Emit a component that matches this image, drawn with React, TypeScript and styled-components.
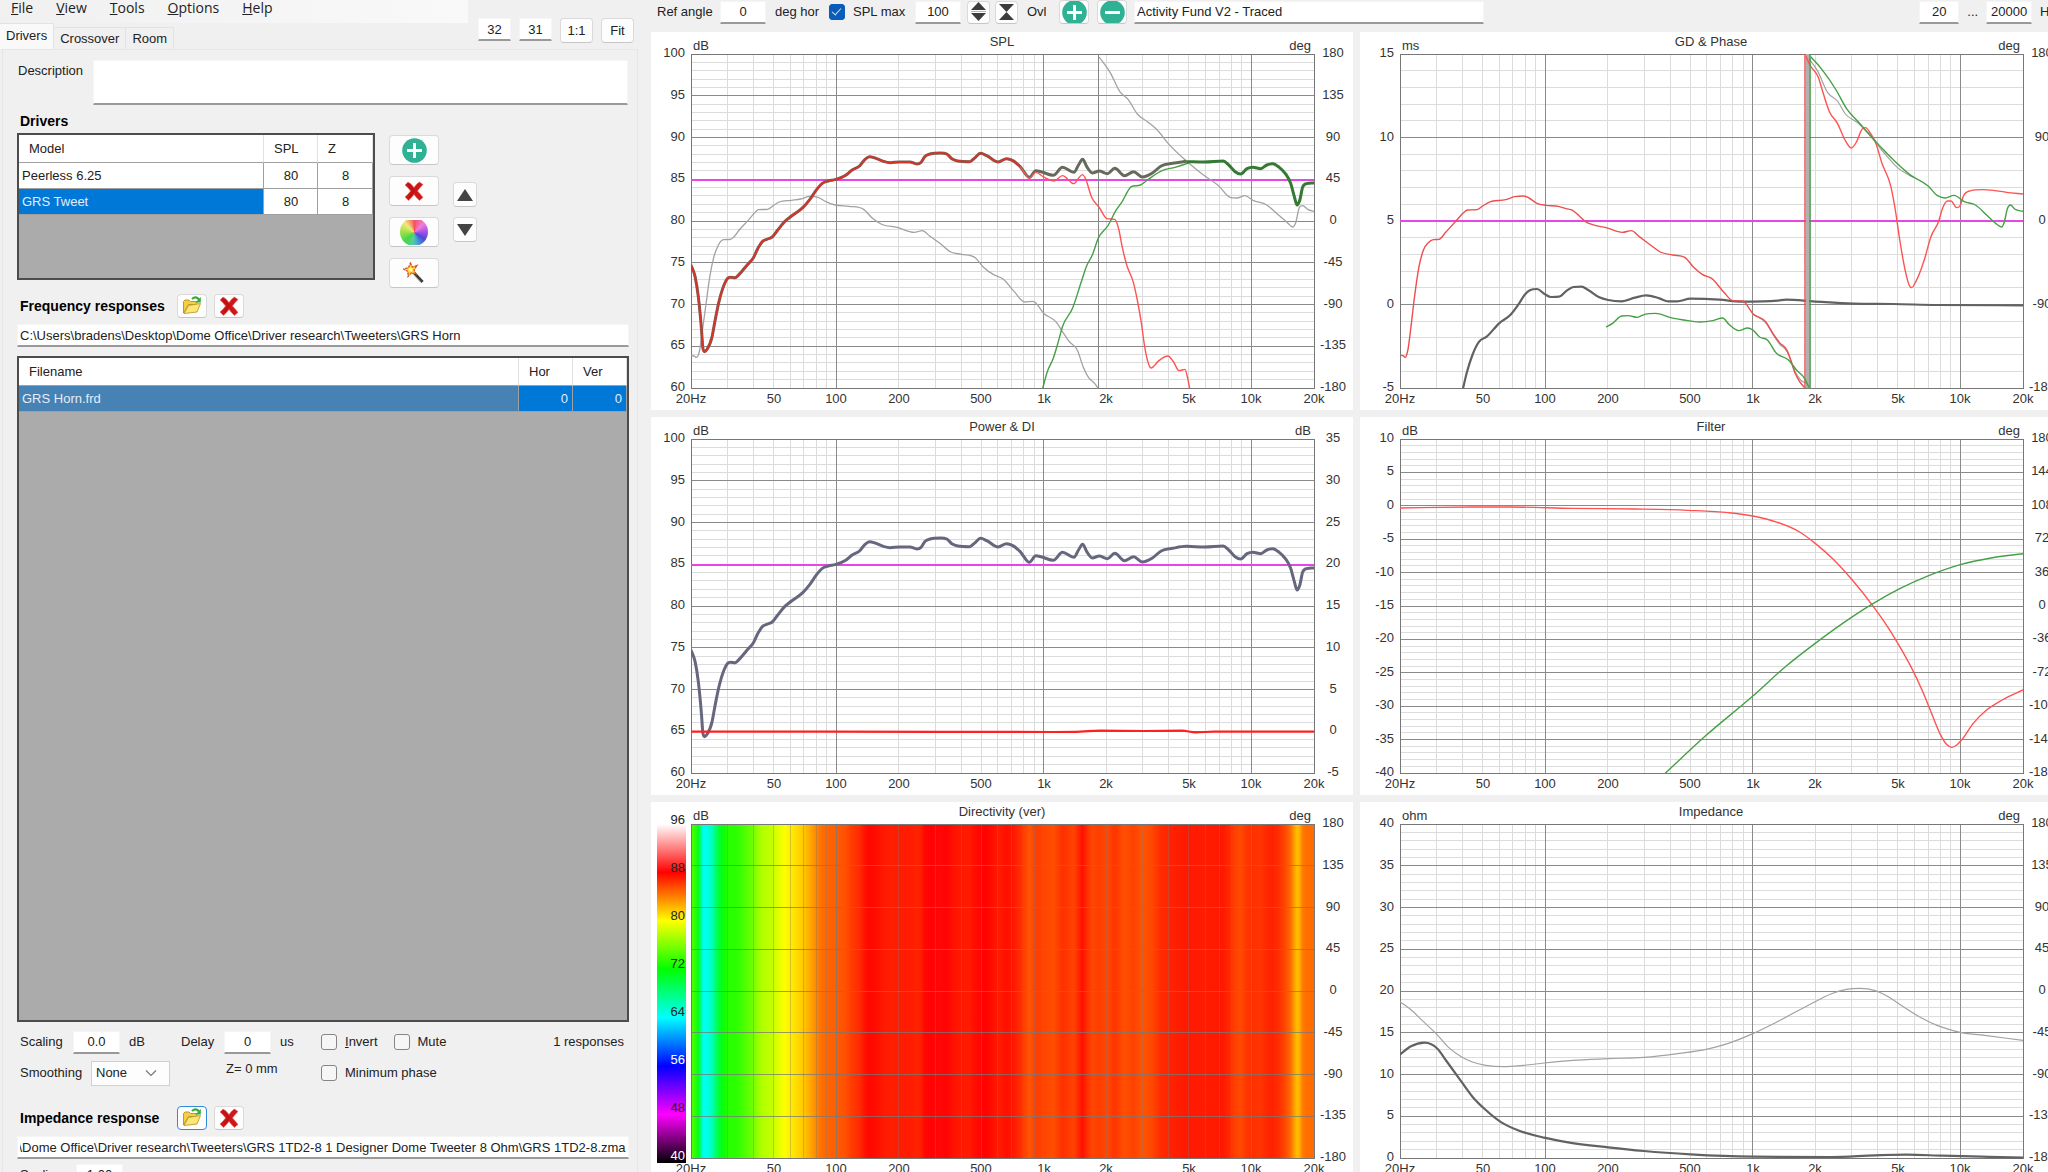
import React, { useEffect, useId, useRef, useState } from "react";
import styled, { createGlobalStyle, css } from "styled-components";

const sans = '"Liberation Sans", Arial, sans-serif';

const GlobalStyle = createGlobalStyle`
  *, *::before, *::after { box-sizing: border-box; }
  body {
    margin: 0;
    background: #f0f0f0;
    color: #222;
    font: 13px/16px ${sans};
    overflow: hidden;
  }
  button, input, select, textarea { font: inherit; color: inherit; margin: 0; }
`;

/* ---------- shell ---------- */

const Shell = styled.div`
  display: grid;
  grid-template-columns: 638px minmax(0, 1fr);
  height: 100vh;
  overflow: hidden;
`;

const Sidebar = styled.aside`
  display: flex;
  flex-direction: column;
  min-width: 0;
`;

const Workspace = styled.main`
  display: flex;
  flex-direction: column;
  margin: 0 -14px 0 13px;
`;

/* ---------- shared controls ---------- */

const field = css`
  height: 23px;
  border: 1px solid #f5f5f5;
  border-bottom: 2px solid #999;
  background: #fff;
  padding: 0 2px;
  border-radius: 1px;
  outline: none;
`;

const NumberField = styled.input<{ $w: number }>`
  ${field}
  width: ${(p) => p.$w}px;
  text-align: center;
`;

const TextField = styled.input`
  ${field}
  width: 100%;
`;

const OverlayField = styled(TextField)`
  width: 350px;
  margin-left: 7px;
`;

const DescriptionField = styled.textarea`
  ${field}
  flex: 1;
  height: 45px;
  resize: none;
`;

const PushButton = styled.button<{ $w: number; $h: number; $focused?: boolean }>`
  display: flex;
  align-items: center;
  justify-content: center;
  width: ${(p) => p.$w}px;
  height: ${(p) => p.$h}px;
  padding: 0;
  overflow: hidden;
  flex: none;
  background: #fdfdfd;
  border: 1px solid ${(p) => (p.$focused ? "#2f8ad8" : "#dadada")};
  border-bottom-color: ${(p) => (p.$focused ? "#2f8ad8" : "#c6c6c6")};
  border-radius: 4px;
`;

const Tick = styled.input.attrs({ type: "checkbox" })`
  appearance: none;
  position: relative;
  width: 16px;
  height: 16px;
  flex: none;
  border: 1px solid #858585;
  border-radius: 3px;
  background: #f6f6f6;
  &:checked { background: #0a5cb8; border-color: #0a5cb8; }
  &:checked::after {
    content: "";
    position: absolute;
    left: 4px;
    top: 1px;
    width: 5px;
    height: 9px;
    border: solid #cfe2f7;
    border-width: 0 1px 1px 0;
    transform: rotate(42deg);
  }
`;

const TickLabel = styled.label`
  display: flex;
  align-items: center;
  gap: 8px;
`;

/* ---------- menu and tabs ---------- */

const Header = styled.header`
  display: grid;
  grid-template-columns: 468px 1fr;
  height: 49px;
  flex: none;
`;

const HeaderLeft = styled.div`
  display: flex;
  flex-direction: column;
  justify-content: space-between;
`;

const MenuBar = styled.nav`
  display: flex;
  height: 23px;
  gap: 23px;
  padding: 0 11px;
  background: linear-gradient(90deg, #f0f0f0, #f9f9f9);
`;

const MenuItem = styled.button`
  border: 0;
  padding: 0;
  height: 16px;
  background: none;
  font: 14px/16px "Open Sans", "Noto Sans", sans-serif;
`;

const Tabs = styled.div`
  display: flex;
  align-items: flex-end;
`;

const Tab = styled.button<{ $active?: boolean }>`
  height: ${(p) => (p.$active ? 26 : 22)}px;
  padding: 0 6px ${(p) => (p.$active ? 2 : 0)}px;
  border: 1px solid #e3e3e3;
  border-width: 1px 1px 0 0;
  background: ${(p) => (p.$active ? "#f9f9f9" : "#f0f0f0")};
`;

const SizeControls = styled.div`
  display: flex;
  gap: 8px;
  padding: 18px 0 0 10px;
`;

const Pane = styled.section`
  display: flex;
  flex-direction: column;
  margin-left: 2px;
  padding: 10px 8px 0 14px;
  border: solid #e6e6e6;
  border-width: 1px 1px 0;
`;

/* ---------- driver pane ---------- */

const DescriptionRow = styled.div`
  display: flex;
  padding: 0 1px;
  label { width: 75px; line-height: 22px; }
`;

const Heading = styled.h2`
  margin: 0;
  padding-left: 3px;
  font-size: 14px;
  line-height: 20px;
  font-weight: bold;
  color: #000;
`;

const DriversHeading = styled(Heading)`
  margin: 6px 0 2px;
`;

const DriversRow = styled.div`
  display: flex;
  align-items: flex-start;
  gap: 14px;
`;

const ButtonStack = styled.div<{ $gap: number; $top: number }>`
  display: flex;
  flex-direction: column;
  gap: ${(p) => p.$gap}px;
  padding-top: ${(p) => p.$top}px;
`;

const ListFrame = styled.div`
  border: 2px solid #4c4c4c;
  background: #ababab;
`;

const DriversFrame = styled(ListFrame)`
  width: 358px;
  height: 147px;
`;

const ResponsesFrame = styled(ListFrame)`
  height: calc(100vh - 506px);
  min-height: 120px;
  margin-top: 9px;
`;

const List = styled.table`
  width: 100%;
  table-layout: fixed;
  border-collapse: separate;
  border-spacing: 0;
  background: #fff;
  th {
    height: 28px;
    padding: 0 0 0 10px;
    text-align: left;
    font-weight: normal;
    border-right: 1px solid #e2e2e2;
    border-bottom: 1px solid #a0a0a0;
  }
`;

const Cell = styled.td<{ $tone?: "accent" | "steel"; $align?: "center" | "right" }>`
  height: 26px;
  padding: 0 ${(p) => (p.$align === "center" ? 2 : 4)}px 0 3px;
  text-align: ${(p) => p.$align ?? "left"};
  border-right: 1px solid #a0a0a0;
  border-bottom: 1px solid #a0a0a0;
  background: ${(p) => (p.$tone === "accent" ? "#0078d7" : p.$tone === "steel" ? "#4682b4" : "#fff")};
  color: ${(p) => (p.$tone ? "#e3eefa" : "#222")};
`;

const SectionRow = styled.div<{ $top: number }>`
  display: grid;
  grid-template-columns: 160px auto;
  justify-content: start;
  align-items: center;
  height: 24px;
  margin: ${(p) => p.$top}px 0 6px;
  ${Heading} { white-space: nowrap; }
`;

const SectionButtons = styled.div`
  display: flex;
  gap: 7px;
`;

const Settings = styled.div`
  display: grid;
  grid-template-columns: 301px 1fr;
  row-gap: 7px;
  padding: 0 5px 0 3px;
  margin-top: 8px;
`;

const SettingLine = styled.div`
  display: flex;
  align-items: center;
  height: 24px;
`;

const SettingLabel = styled.label<{ $w: number }>`
  width: ${(p) => p.$w}px;
`;

const Unit = styled.span<{ $w: number }>`
  width: ${(p) => p.$w}px;
  padding-left: 9px;
`;

const TickLine = styled(SettingLine)`
  gap: 16px;
`;

const Count = styled.output`
  margin-left: auto;
`;

const SelectBox = styled.div`
  display: grid;
  grid-template-columns: 1fr 24px;
  align-items: center;
  width: 79px;
  height: 25px;
  border: 1px solid #d0d0d0;
  background: #fdfdfd;
  svg { grid-area: 1 / 2; pointer-events: none; }
`;

const SmoothingSelect = styled.select`
  appearance: none;
  grid-area: 1 / 1 / 2 / 3;
  width: 100%;
  padding: 0 4px;
  border: 0;
  background: none;
`;

const Delayed = styled.span`
  align-self: flex-start;
  margin-left: 56px;
`;

const ScaleRow = styled(SettingLine)`
  padding-left: 3px;
  margin-top: 4px;
`;

/* ---------- toolbar ---------- */

const Toolbar = styled.div`
  display: flex;
  align-items: center;
  height: 24px;
  padding: 0 6px;
  margin-bottom: 8px;
  flex: none;
`;

const ToolLabel = styled.label<{ $w: number }>`
  width: ${(p) => p.$w}px;
  flex: none;
`;

const ToolButtons = styled.div<{ $gap: number }>`
  display: flex;
  gap: ${(p) => p.$gap}px;
  margin-left: 6px;
`;

const RangeGroup = styled.div`
  display: flex;
  align-items: center;
  gap: 8px;
  margin-left: auto;
`;

/* ---------- icons ---------- */

const PlusIcon = ({ minus }: { minus?: boolean }) => (
  <svg width="25" height="25" viewBox="0 0 25 25">
    <circle cx="12.5" cy="12.5" r="12.3" fill="#2fb193" />
    <path d={minus ? "M5 12.5H20" : "M5 12.5H20M12.5 5V20"} stroke="#fff" strokeWidth="3" />
  </svg>
);

const CrossIcon = () => (
  <svg width="20" height="20" viewBox="0 0 20 20">
    <path
      d="M1 4 4 1Q7 2 10 6.500Q12.500 2.500 15.500 1L19 3.500Q16 6.500 13.500 10Q16.500 13 19 16.500L15.500 19.500Q12.500 17 10 13.500Q7.500 17 4.500 19.500L1 16Q4 13.500 6.500 10Q4 6.500 1 4Z"
      fill="#cf1717"
      stroke="#e57373"
      strokeWidth=".6"
    />
    <path d="M4 3 10 9.500 5 16" fill="none" stroke="#a80f0f" strokeWidth="2" opacity=".5" />
  </svg>
);

const FolderIcon = () => (
  <svg width="20" height="20" viewBox="0 0 20 20">
    <path d="M1.500 17V5.500L3 4H7L8.500 5.500H15V8.500H6.500Z" fill="#f2cf45" stroke="#b8901c" strokeWidth=".9" />
    <path d="M2 17.500 6.500 9.500 18.500 7.500 15 16Z" fill="#fbe678" stroke="#c29a22" strokeWidth=".9" />
    <path d="M10 3Q14-.5 17 3.500" fill="none" stroke="#3ba83b" strokeWidth="2.200" />
    <path d="M18.800 1V6.500H13.500Z" fill="#3ba83b" />
  </svg>
);

const WandIcon = () => (
  <svg width="22" height="22" viewBox="0 0 22 22">
    <path d="M9 9 19.500 20" stroke="#3c3c3c" strokeWidth="3.200" />
    <path d="M8.500 10.500 17.500 20" stroke="#b8b8b8" strokeWidth="1" />
    <path
      d="M7.500 1 9.200 5 14 3.500 11 8 13 12 8.600 10.800 5 14.500 5 9.600 .5 7 5.600 5.600Z"
      fill="#ffd93a"
      stroke="#d8502c"
      strokeWidth="1.300"
      strokeDasharray="2.600 .8"
    />
    <circle cx="7.500" cy="7.500" r="2" fill="#fff6a8" />
  </svg>
);

const ColorWheel = styled.span`
  width: 29px;
  height: 25px;
  background: conic-gradient(#f2535f, #f07cdc 45deg, #b654e8 80deg, #4a49d8 125deg, #48a6d0 165deg, #55cda0 190deg, #44d844 230deg, #a4e04e 275deg, #f3e77a 315deg, #f2535f);
  clip-path: circle(14px at 50% 50%);
`;

const Triangle = ({ down }: { down?: boolean }) => (
  <svg width="16" height="14" viewBox="0 0 16 14">
    <path d={down ? "M0 1H16L8 13Z" : "M0 13H16L8 1Z"} fill="#444" />
  </svg>
);

const ChevronIcon = () => (
  <svg width="12" height="8" viewBox="0 0 12 8">
    <path d="M1 1.500 6 6.500 11 1.500" fill="none" stroke="#777" strokeWidth="1.200" />
  </svg>
);

const ExpandIcon = () => (
  <svg width="17" height="20" viewBox="0 0 17 20">
    <path d="M1 8 8.500 0 16 8ZM1 11H16L8.500 19Z" fill="#3c3c3c" />
    <path d="M1 9.500H16" stroke="#b5b5b5" strokeWidth="1" />
  </svg>
);

const CollapseIcon = () => (
  <svg width="17" height="20" viewBox="0 0 17 20">
    <path d="M1 2H16L8.500 10ZM1 18 8.500 10 16 18Z" fill="#3c3c3c" />
  </svg>
);

/* ---------- charts ---------- */

type Point = [number, number];

const LEFT = 40;
const WIDTH = 623;
const TOP = 22;
const HEIGHT = 334;
const RIGHT = LEFT + WIDTH;
const BOTTOM = TOP + HEIGHT;

/* The two chart columns store their curves in plotter units of different pitch. */
type Space = { sx: number; dx: number; dy: number };
const spaceA: Space = { sx: 0.45918, dx: -11, dy: -32 };
const spaceB: Space = { sx: 0.44516, dx: -10, dy: -32 };
const lower = (s: Space): Space => ({ ...s, dy: -7 });

const parse = (data: string): Point[] =>
  data.trim().split(/\s+/).map((p) => p.split(",").map(Number) as Point);

/* Cubic Hermite curve with slopes limited so that it never overshoots its points. */
function smooth(points: Point[], s: Space): string {
  const p = points.map(([x, y]): Point => [x * s.sx + s.dx, y / 3 + s.dy]);
  const n = p.length;
  const h = p.slice(1).map((q, i) => q[0] - p[i][0]);
  const slope = p.slice(1).map((q, i) => (q[1] - p[i][1]) / h[i]);
  const m = p.map((_, i) => {
    if (i === 0) return slope[0];
    if (i === n - 1) return slope[n - 2];
    const a = slope[i - 1];
    const b = slope[i];
    if (a * b <= 0) return 0;
    const avg = (a * h[i] + b * h[i - 1]) / (h[i] + h[i - 1]);
    const cap = 3 * Math.min(Math.abs(a), Math.abs(b));
    return Math.sign(avg) * Math.min(Math.abs(avg), cap);
  });
  let d = `M${p[0][0].toFixed(2)} ${p[0][1].toFixed(2)}`;
  for (let i = 0; i < n - 1; i++) {
    const t = h[i] / 3;
    const c = [
      p[i][0] + t,
      p[i][1] + m[i] * t,
      p[i + 1][0] - t,
      p[i + 1][1] - m[i + 1] * t,
      p[i + 1][0],
      p[i + 1][1],
    ];
    d += `C${c.map((v) => v.toFixed(2)).join(" ")}`;
  }
  return d;
}

const splHead = parse(`111,795 120,830 127,890 134,990 137,1045 141,1055 146,1048 157,1010 163,965 172,905 183,855 190,836 197,832 207,833
218,820 232,797 247,773 258,742 267,724 276,718 288,711 300,690 315,665 330,648 355,622 370,598 385,568 397,550 410,543 425,539
448,526 462,510 478,498 490,478 500,470 512,474 530,484 545,488 565,486 588,486 603,492 612,487 620,470 632,462 655,459 668,462
680,477 692,483 718,485 728,475 742,460 755,467 780,486 798,476 812,482 828,500`);
const splMid = parse(`848,532 862,512 875,516 900,526 920,502 945,517 955,495 964,478 973,500 985,519 1000,513 1018,521 1034,505
1055,527 1075,515 1094,531 1115,520 1135,498 1160,490 1190,484`);
const splTail = parse(`1190,485 1230,486 1270,483 1282,495 1296,515 1308,522 1322,506 1335,502 1352,506 1365,495 1378,491 1392,502
1405,520 1417,550 1425,590 1431,615 1437,600 1443,562 1452,551 1468,549`);
const splTotal = [...splHead, ...splMid, ...splTail.slice(1)];
const wooferTail = parse(`828,500 838,520 848,535 862,517 878,530 902,543 920,527 945,551 955,535 963,524 970,535 983,590 1000,622
1017,656 1034,658 1043,690 1050,740 1060,795 1075,850 1083,900 1092,970 1098,1030 1105,1080 1113,1104 1130,1082 1150,1068
1162,1086 1174,1112 1187,1108 1192,1130 1197,1165`);
const tweeterRise = parse(`877,1165 887,1115 900,1075 910,1030 920,980 942,925 960,850 972,800 985,765 998,715 1020,675 1035,635
1050,605 1070,560 1090,555 1110,535 1137,512 1165,502 1195,489`);
const phaseA = parse(`111,1066 118,1068 123,1072 130,1050 136,990 143,920 152,830 160,775 170,737 182,719 197,718 205,710 218,687
235,662 248,641 258,629 278,628 292,615 303,606 330,601 350,597 370,589 388,592 405,605 425,615 455,619 487,628 505,653 525,672
560,682 597,697 615,692 630,707 655,732 677,756 700,763 730,773 748,802 770,824 790,836 815,875 838,906 856,904 880,941 907,967
920,995 935,1025 953,1052 965,1100 977,1133 990,1150 998,1165`);
const phaseB = parse(`1000,171 1025,220 1045,275 1063,298 1083,342 1105,365 1125,388 1152,433 1190,483 1225,523 1260,557 1285,592
1300,594 1317,587 1335,601 1365,615 1385,638 1410,668 1421,681 1428,668 1436,622 1443,617 1455,629 1468,634`);
const gdRedA = parse(`112,1066 119,1067 124,1072 130,1050 137,980 145,890 155,800 165,750 176,728 187,719 200,718 215,697 240,660
255,638 264,630 285,629 298,618 312,607 350,599 370,590 390,588 402,594 420,610 440,616 468,619 485,626 500,631 515,648 530,666
545,674 575,683 612,697 632,692 650,710 675,735 697,756 725,765 752,772 772,802 792,824 813,836 840,877 860,902 882,903 905,941
935,967 950,1000 965,1028 982,1052 990,1080 1000,1120 1010,1145 1021,1163`);
const gdRedB = parse(`1024,168 1033,195 1052,232 1063,280 1077,335 1095,370 1112,420 1126,444 1138,425 1150,388 1158,383 1170,402
1180,425 1195,490 1215,560 1225,630 1235,720 1247,810 1256,855 1262,863 1269,850 1290,780 1305,710 1322,665 1332,622 1342,603
1350,603 1363,623 1370,618 1378,588 1395,572 1420,569 1445,571 1475,577 1512,582`);
const gdGrayA = parse(`905,943 935,970 950,1003 965,1032 982,1055 1000,1115 1012,1140 1026,1150`);
const gdGrayB = parse(`1030,175 1050,212 1073,278 1095,303 1113,342 1140,368 1160,395 1200,459 1230,503 1265,532`);
const gdGreenA = parse(`575,981 590,970 610,948 625,947 645,952 662,943 687,940 720,953 750,960 785,966 815,962 837,954 852,974
873,992 893,984 905,990 920,1011 937,1019 958,1060 985,1080 1003,1110 1020,1133 1031,1162`);
const gdGreenB = parse(`1035,170 1060,208 1092,270 1115,325 1140,363 1170,408 1195,445 1225,485 1260,526 1298,557 1320,587 1337,594
1357,586 1380,605 1405,615 1430,645 1455,675 1464,681 1470,665 1477,625 1484,615 1493,627 1512,634`);
const groupDelay = parse(`254,1165 262,1120 275,1065 290,1025 307,1010 335,970 360,945 380,910 392,885 405,870 420,867 437,882
452,891 470,890 487,872 502,861 520,860 535,870 560,892 580,900 610,904 640,893 665,886 695,895 715,904 735,904 765,896 830,899
880,905 960,902 980,899 1040,904 1130,911 1220,912 1320,915 1512,916`);
const filterRed = parse(`112,294 200,292 360,291 500,295 640,297 760,301 850,308 905,318 960,337 1010,366 1045,400 1085,447 1125,505
1172,583 1200,635 1232,703 1260,770 1285,840 1305,905 1325,970 1340,1003 1352,1012 1363,1005 1375,988 1400,940 1430,900 1465,870
1512,840`);
const filterGreen = parse(`708,1090 800,976 905,858 980,768 1045,700 1110,637 1172,583 1235,536 1300,497 1371,464 1440,444 1512,431`);
const impedance = parse(`112,779 137,754 167,743 197,762 215,795 245,850 275,905 305,945 340,982 380,1007 436,1028 490,1042
580,1057 660,1068 765,1078 905,1085 1080,1086 1180,1081 1250,1079 1330,1082 1420,1085 1512,1088`);
const impedancePhase = parse(`112,620 135,642 165,680 195,718 222,758 250,785 275,801 305,811 345,815 390,811 436,804 500,796
580,791 660,787 740,775 800,763 850,745 905,716 960,680 1045,620 1080,597 1115,583 1145,580 1180,587 1210,606 1245,637 1285,670
1320,692 1371,712 1430,722 1512,736`);
const directivityIndex = parse(`111,965 400,965 900,966 960,965 1000,962 1100,963 1180,962 1210,967 1250,965 1468,965`);

const freqTicks: [number, string][] = [
  [20, "20Hz"], [50, "50"], [100, "100"], [200, "200"], [500, "500"],
  [1000, "1k"], [2000, "2k"], [5000, "5k"], [10000, "10k"], [20000, "20k"],
];
const minorFreqs = [10, 100, 1000, 10000].flatMap((d) =>
  [2, 3, 4, 5, 6, 7, 8, 9].map((n) => n * d).filter((f) => f > 20 && f < 20000)
);
const fx = (f: number) => LEFT + (WIDTH * Math.log10(f / 20)) / 3;
const snap = (v: number) => Math.floor(v) + 0.5;

const Panel = styled.figure`
  margin: 0;
  background: #fff;
  svg { display: block; width: 100%; height: auto; }
  text { font-family: ${sans}; font-size: 13px; fill: #333; }
`;

const ChartGrid = styled.div`
  display: grid;
  grid-template-columns: repeat(2, minmax(0, 1fr));
  gap: 7px;
`;

type LineSpec = { d: string; color: string; w?: number };

type ChartProps = {
  title: string;
  leftUnit: string;
  rightUnit: string;
  left: number[];
  right: number[];
  minor?: number;
  heat?: boolean;
  lines?: LineSpec[];
  reference?: number;
};

const range = (from: number, to: number, step: number) => {
  const out: number[] = [];
  for (let v = from; step < 0 ? v >= to : v <= to; v += step) out.push(v);
  return out;
};

const scaleStops: [number, number[]][] = [
  [40, [0, 0, 0]], [48, [255, 0, 255]], [56, [0, 0, 255]], [64, [0, 255, 255]],
  [72, [0, 255, 0]], [80, [255, 255, 0]], [88, [255, 0, 0]], [96, [255, 255, 255]],
];

function heatColor(db: number) {
  const i = Math.max(1, scaleStops.findIndex(([v]) => v >= db));
  const [v0, a] = scaleStops[i - 1];
  const [v1, b] = scaleStops[i];
  const t = (db - v0) / (v1 - v0);
  return `rgb(${a.map((c, k) => Math.round(c + (b[k] - c) * t)).join(",")})`;
}

function Heat() {
  const id = useId();
  return (
    <>
      <defs>
        <linearGradient id={`${id}h`}>
          {splTotal.map(([x, y], i) => (
            <stop key={i} offset={(x - 111) / 1357} stopColor={heatColor(100 - ((y - 164) / 1001) * 40)} />
          ))}
        </linearGradient>
        <linearGradient id={`${id}v`} x1="0" y1="1" x2="0" y2="0">
          {scaleStops.map(([v, c]) => (
            <stop key={v} offset={(v - 40) / 56} stopColor={`rgb(${c.join(",")})`} />
          ))}
        </linearGradient>
      </defs>
      <rect x={LEFT} y={TOP} width={WIDTH} height={HEIGHT + 1} fill={`url(#${id}h)`} />
      <rect x="6" y={TOP} width="29" height={HEIGHT + 5} fill={`url(#${id}v)`} />
      {scaleStops.map(([v]) => (
        <text key={v} x="34" y={22 + (96 - v) * 6} textAnchor="end" style={{ fill: v === 56 || v === 40 ? "#fff" : "#222" }}>
          {v}
        </text>
      ))}
    </>
  );
}

function Chart({ title, leftUnit, rightUnit, left, right, minor = 5, heat, lines = [], reference }: ChartProps) {
  const id = useId();
  const at = (i: number, n: number) => TOP + (HEIGHT * i) / (n - 1);
  const rows = heat ? right.length : left.length;
  const minorCount = heat ? 0 : (rows - 1) * minor;
  const major = heat ? "rgba(120,120,120,.75)" : "#8a8a8a";
  const faint = heat ? "rgba(120,120,120,.35)" : "#dcdcdc";
  return (
    <Panel aria-label={title}>
      <svg viewBox="0 0 702 378">
        <clipPath id={id}>
          <rect x={LEFT} y={TOP} width={WIDTH} height={HEIGHT + 1} />
        </clipPath>
        {heat && <Heat />}
        {minorFreqs.map((f) => (
          <path key={f} d={`M${snap(fx(f))} ${TOP}V${BOTTOM}`} stroke={faint} />
        ))}
        {Array.from({ length: minorCount }, (_, i) => (
          <path key={i} d={`M${LEFT} ${snap(at(i, minorCount + 1))}H${RIGHT}`} stroke={faint} />
        ))}
        {Array.from({ length: rows }, (_, i) => (
          <path key={i} d={`M${LEFT} ${snap(at(i, rows))}H${RIGHT}`} stroke={major} />
        ))}
        {[100, 1000, 10000].map((f) => (
          <path key={f} d={`M${snap(fx(f))} ${TOP}V${BOTTOM}`} stroke={major} />
        ))}
        <rect x={LEFT + 0.5} y={TOP + 0.5} width={WIDTH} height={HEIGHT} fill="none" stroke="#777" />
        {reference !== undefined && (
          <path d={`M${LEFT} ${reference}H${RIGHT}`} stroke="#e646e6" strokeWidth="2" />
        )}
        <g clipPath={`url(#${id})`} fill="none" strokeLinejoin="round">
          {lines.map((l, i) => (
            <path key={i} d={l.d} stroke={l.color} strokeWidth={l.w ?? 1} />
          ))}
        </g>
        <text x="351" y="14" textAnchor="middle">{title}</text>
        <text x="42" y="18">{leftUnit}</text>
        <text x="660" y="18" textAnchor="end">{rightUnit}</text>
        {!heat && left.map((v, i) => (
          <text key={v} x="34" y={Math.round(at(i, left.length)) + 3} textAnchor="end">{v}</text>
        ))}
        {right.map((v, i) => (
          <text key={v} x="682" y={Math.round(at(i, right.length)) + 3} textAnchor="middle">{v}</text>
        ))}
        {freqTicks.map(([f, label]) => (
          <text key={f} x={Math.round(fx(f))} y="371" textAnchor="middle">{label}</text>
        ))}
      </svg>
    </Panel>
  );
}

const RED = "#ff5252";
const GREEN = "#45a045";
const GRAY = "#a2a2a2";
const degrees = range(180, -180, -45);
const wrapLine = (x: number) => `M${x} ${TOP}V${BOTTOM}`;

function Charts() {
  const a2 = lower(spaceA);
  const b2 = lower(spaceB);
  return (
    <ChartGrid>
      <Chart
        title="SPL" leftUnit="dB" rightUnit="deg" left={range(100, 60, -5)} right={degrees} reference={148}
        lines={[
          { d: smooth(phaseA, spaceA), color: GRAY, w: 1.3 },
          { d: wrapLine(447.5), color: "#858585" },
          { d: smooth(phaseB, spaceA), color: GRAY, w: 1.3 },
          { d: smooth([...splHead, ...splMid], spaceA), color: "#666a5c", w: 3 },
          { d: smooth(splHead, spaceA), color: "#d4342a", w: 2 },
          { d: smooth(wooferTail, spaceA), color: RED, w: 1.4 },
          { d: smooth(tweeterRise, spaceA), color: GREEN, w: 1.4 },
          { d: smooth(splTail, spaceA), color: "#347a34", w: 3 },
        ]}
      />
      <Chart
        title="GD & Phase" leftUnit="ms" rightUnit="deg" left={range(15, -5, -5)} right={range(180, -180, -90)} reference={189}
        lines={[
          { d: smooth(groupDelay, spaceB), color: "#626262", w: 2.2 },
          { d: smooth(gdGrayA, spaceB), color: GRAY, w: 1.2 },
          { d: smooth(gdGrayB, spaceB), color: GRAY, w: 1.2 },
          { d: wrapLine(447.5), color: "#b0b0b0", w: 3 },
          { d: smooth(gdRedA, spaceB), color: "#ee4e4e", w: 1.4 },
          { d: wrapLine(445), color: "#f04848", w: 1.4 },
          { d: smooth(gdRedB, spaceB), color: RED, w: 1.4 },
          { d: smooth(gdGreenA, spaceB), color: GREEN, w: 1.4 },
          { d: wrapLine(450), color: "#4a964a", w: 1.6 },
          { d: smooth(gdGreenB, spaceB), color: GREEN, w: 1.4 },
        ]}
      />
      <Chart
        title="Power & DI" leftUnit="dB" rightUnit="dB" left={range(100, 60, -5)} right={range(35, -5, -5)} reference={148}
        lines={[
          { d: smooth(splTotal, spaceA), color: "#66677e", w: 3 },
          { d: smooth(directivityIndex, a2), color: "#ff2020", w: 2.2 },
        ]}
      />
      <Chart
        title="Filter" leftUnit="dB" rightUnit="deg" left={range(10, -40, -5)} right={range(180, -180, -36)}
        lines={[
          { d: smooth(filterRed, b2), color: RED, w: 1.4 },
          { d: smooth(filterGreen, b2), color: GREEN, w: 1.4 },
        ]}
      />
      <Chart title="Directivity (ver)" leftUnit="dB" rightUnit="deg" left={[]} right={degrees} heat />
      <Chart
        title="Impedance" leftUnit="ohm" rightUnit="deg" left={range(40, 0, -5)} right={degrees}
        lines={[
          { d: smooth(impedancePhase, b2), color: GRAY, w: 1.2 },
          { d: smooth(impedance, b2), color: "#626262", w: 2.2 },
        ]}
      />
    </ChartGrid>
  );
}

/* ---------- application ---------- */

function SectionHead({ text, top, focused }: { text: string; top: number; focused?: boolean }) {
  return (
    <SectionRow $top={top}>
      <Heading>{text}</Heading>
      <SectionButtons>
        <PushButton $w={30} $h={24} $focused={focused} aria-label="Open"><FolderIcon /></PushButton>
        <PushButton $w={30} $h={24} aria-label="Remove"><CrossIcon /></PushButton>
      </SectionButtons>
    </SectionRow>
  );
}

export default function App() {
  const zmaRef = useRef<HTMLInputElement>(null);
  const [splMax, setSplMax] = useState(true);

  /* keep the file name at the end of the long path in view */
  useEffect(() => {
    const el = zmaRef.current;
    if (el) el.scrollLeft = el.scrollWidth;
  }, []);

  return (
    <>
      <GlobalStyle />
      <Shell>
        <Sidebar>
          <Header>
            <HeaderLeft>
              <MenuBar>
                {["File", "View", "Tools", "Options", "Help"].map((m) => (
                  <MenuItem key={m}><u>{m[0]}</u>{m.slice(1)}</MenuItem>
                ))}
              </MenuBar>
              <Tabs role="tablist">
                <Tab role="tab" aria-selected $active>Drivers</Tab>
                <Tab role="tab">Crossover</Tab>
                <Tab role="tab">Room</Tab>
              </Tabs>
            </HeaderLeft>
            <SizeControls>
              <NumberField $w={33} aria-label="Columns" defaultValue="32" />
              <NumberField $w={33} aria-label="Rows" defaultValue="31" />
              <PushButton $w={33} $h={25}>1:1</PushButton>
              <PushButton $w={33} $h={25}>Fit</PushButton>
            </SizeControls>
          </Header>

          <Pane>
            <DescriptionRow>
              <label htmlFor="description">Description</label>
              <DescriptionField id="description" />
            </DescriptionRow>

            <DriversHeading>Drivers</DriversHeading>
            <DriversRow>
              <DriversFrame>
                <List>
                  <colgroup><col /><col width="54" /><col width="55" /></colgroup>
                  <thead><tr><th>Model</th><th>SPL</th><th>Z</th></tr></thead>
                  <tbody>
                    <tr><Cell>Peerless 6.25</Cell><Cell $align="center">80</Cell><Cell $align="center">8</Cell></tr>
                    <tr><Cell $tone="accent">GRS Tweet</Cell><Cell $align="center">80</Cell><Cell $align="center">8</Cell></tr>
                  </tbody>
                </List>
              </DriversFrame>
              <ButtonStack $gap={11} $top={2}>
                <PushButton $w={50} $h={30} aria-label="Add driver"><PlusIcon /></PushButton>
                <PushButton $w={50} $h={30} aria-label="Delete driver"><CrossIcon /></PushButton>
                <PushButton $w={50} $h={30} aria-label="Driver colour"><ColorWheel /></PushButton>
                <PushButton $w={50} $h={30} aria-label="Driver wizard"><WandIcon /></PushButton>
              </ButtonStack>
              <ButtonStack $gap={10} $top={49}>
                <PushButton $w={24} $h={25} aria-label="Move up"><Triangle /></PushButton>
                <PushButton $w={24} $h={25} aria-label="Move down"><Triangle down /></PushButton>
              </ButtonStack>
            </DriversRow>

            <SectionHead text="Frequency responses" top={6} />
            <TextField
              aria-label="Frequency response folder"
              defaultValue="C:\Users\bradens\Desktop\Dome Office\Driver research\Tweeters\GRS Horn"
            />
            <ResponsesFrame>
              <List>
                <colgroup><col /><col width="54" /><col width="54" /></colgroup>
                <thead><tr><th>Filename</th><th>Hor</th><th>Ver</th></tr></thead>
                <tbody>
                  <tr>
                    <Cell $tone="steel">GRS Horn.frd</Cell>
                    <Cell $tone="accent" $align="right">0</Cell>
                    <Cell $tone="accent" $align="right">0</Cell>
                  </tr>
                </tbody>
              </List>
            </ResponsesFrame>

            <Settings>
              <SettingLine>
                <SettingLabel $w={53} htmlFor="scaling">Scaling</SettingLabel>
                <NumberField $w={47} id="scaling" defaultValue="0.0" />
                <Unit $w={61}>dB</Unit>
                <SettingLabel $w={43} htmlFor="delay">Delay</SettingLabel>
                <NumberField $w={47} id="delay" defaultValue="0" />
                <Unit $w={50}>us</Unit>
              </SettingLine>
              <TickLine>
                <TickLabel><Tick /><span><u>I</u>nvert</span></TickLabel>
                <TickLabel><Tick />Mute</TickLabel>
                <Count>1 responses</Count>
              </TickLine>
              <SettingLine>
                <SettingLabel $w={71} htmlFor="smoothing">Smoothing</SettingLabel>
                <SelectBox>
                  <SmoothingSelect id="smoothing"><option>None</option></SmoothingSelect>
                  <ChevronIcon />
                </SelectBox>
                <Delayed>Z= 0 mm</Delayed>
              </SettingLine>
              <TickLine>
                <TickLabel><Tick />Minimum phase</TickLabel>
              </TickLine>
            </Settings>

            <SectionHead text="Impedance response" top={21} focused />
            <TextField
              ref={zmaRef}
              aria-label="Impedance response file"
              defaultValue="C:\Users\bradens\Desktop\Dome Office\Driver research\Tweeters\GRS 1TD2-8 1 Designer Dome Tweeter 8 Ohm\GRS 1TD2-8.zma"
            />
            <ScaleRow>
              <SettingLabel $w={56} htmlFor="zscale">Scaling</SettingLabel>
              <NumberField $w={47} id="zscale" defaultValue="1.00" />
            </ScaleRow>
          </Pane>
        </Sidebar>

        <Workspace>
          <Toolbar>
            <ToolLabel $w={63} htmlFor="angle">Ref angle</ToolLabel>
            <NumberField $w={46} id="angle" defaultValue="0" />
            <Unit $w={63}>deg hor</Unit>
            <TickLabel>
              <Tick checked={splMax} onChange={(e) => setSplMax(e.target.checked)} />
              <ToolLabel as="span" $w={62}>SPL max</ToolLabel>
            </TickLabel>
            <NumberField $w={46} aria-label="SPL max value" defaultValue="100" />
            <ToolButtons $gap={5}>
              <PushButton $w={23} $h={23} aria-label="Expand range"><ExpandIcon /></PushButton>
              <PushButton $w={23} $h={23} aria-label="Collapse range"><CollapseIcon /></PushButton>
            </ToolButtons>
            <Unit $w={35}>Ovl</Unit>
            <ToolButtons $gap={8}>
              <PushButton $w={30} $h={24} aria-label="Add overlay"><PlusIcon /></PushButton>
              <PushButton $w={30} $h={24} aria-label="Remove overlay"><PlusIcon minus /></PushButton>
            </ToolButtons>
            <OverlayField aria-label="Overlay name" defaultValue="Activity Fund V2 - Traced" />
            <RangeGroup>
              <NumberField $w={40} aria-label="From frequency" defaultValue="20" />
              <span>...</span>
              <NumberField $w={46} aria-label="To frequency" defaultValue="20000" />
              <span>Hz</span>
            </RangeGroup>
          </Toolbar>
          <Charts />
        </Workspace>
      </Shell>
    </>
  );
}
